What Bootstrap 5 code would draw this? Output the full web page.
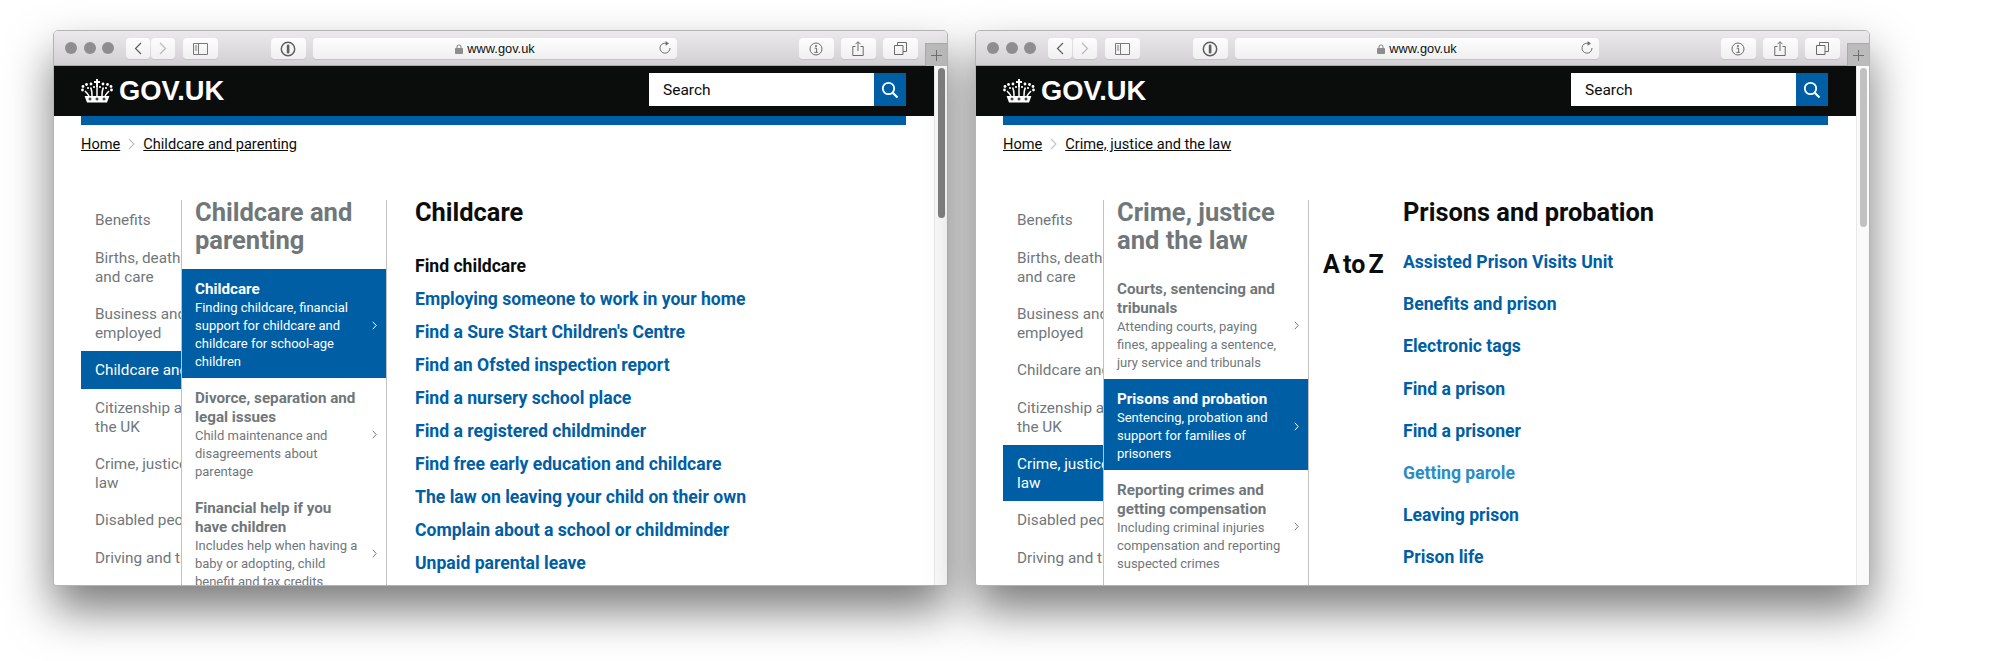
<!DOCTYPE html>
<html lang="en">
<head>
    <meta charset="UTF-8">
    <meta name="viewport" content="width=device-width, initial-scale=1.0">
    <title>GOV.UK navigation</title>
    <link href="https://cdn.jsdelivr.net/npm/bootstrap@5.3.0/dist/css/bootstrap.min.css" rel="stylesheet">
    <style>
        body { width: 2000px; height: 661px; overflow: hidden; background: #fff; font-family: Roboto, "Noto Sans", sans-serif; color: #0b0c0c; }
        .desk { padding: 30px 0 0 53px; gap: 27px; }

        /* safari window */
        .safari { width: 895px; height: 556px; border: 1px solid #b4b4b4; border-radius: 5px 5px 3px 3px; background: #fff; box-shadow: 0 24px 46px rgba(0,0,0,.52); overflow: hidden; }
        .safari-bar { height: 35px; flex: none; padding: 7px 0 0 11px; background: linear-gradient(#ebe9eb, #d2d0d2); border-bottom: 1px solid #a9a9a9; }
        .dot-light { width: 12px; height: 12px; border-radius: 50%; background: #8e8d90; margin-right: 6.5px; }
        .bar-btn { height: 21px; background: linear-gradient(#fdfdfd, #f1f0f1); border-radius: 4px; box-shadow: 0 1px 0 #c4c3c4; }
        .w-nav { width: 24px; }
        .w-tool { width: 34.5px; }
        .url-box { width: 364px; height: 21px; font: 12.8px "Liberation Sans", sans-serif; color: #111; }
        .url-reload { position: absolute; right: 5px; top: 3px; }
        .new-tab { position: absolute; right: 0; top: 12px; width: 22px; height: 23px; background: #bcbbbc; border-left: 1px solid #aaa; border-top: 1px solid #aaa; }
        .gap-back { margin-left: 5px; }
        .gap-fwd { margin-left: 1px; }
        .gap-side { margin-left: 8.500px; }
        .gap-pass { margin-left: 53.500px; }
        .gap-url { margin-left: 7.500px; }
        .gap-info { margin-left: 122px; }
        .gap-tool { margin-left: 7.500px; }

        /* page */
        .page-area { width: 880px; min-width: 0; overflow: hidden; }
        .gov-top { height: 50px; flex: none; background: #0b0c0c; padding: 0 28px 0 27px; }
        .gov-word { font: 700 27.3px/1 "Liberation Sans", sans-serif; color: #fff; margin-left: 6px; }
        .gov-search { width: 257px; height: 33px; margin-bottom: 3px; }
        .gov-search .form-control { height: 33px; border-radius: 0; border: 0; border-right: 1px solid #555; padding: 0 0 0 14px; font-size: 15.5px; color: #0b0c0c; }
        .gov-search .form-control::placeholder { color: #0b0c0c; opacity: 1; }
        .gov-search .btn { width: 32px; height: 33px; padding: 0; border-radius: 0; border: 0; background: #005ea5; }
        .gov-stripe { height: 9px; flex: none; margin: 0 28px 0 27px; background: #005ea5; }
        .gov-crumbs { margin: 9px 0 46px 27px; font-size: 14.6px; line-height: 20px; }
        .gov-crumbs a { color: #0b0c0c; }
        .crumb-sep { margin: 0 8px 0 8px; }

        .columns { padding-left: 27px; height: 400px; }
        .col-topics { width: 100px; flex: none; overflow: hidden; padding-top: 1px; }
        .col-topics ul { width: 260px; }
        .col-topics li { min-height: 38px; padding: 10px 14px 8px; font-size: 15.3px; line-height: 19px; color: #6f777b; white-space: nowrap; }
        .col-topics li.is-on { background: #005ea5; color: #fff; }
        .col-sub { width: 206px; flex: none; border-left: 1px solid #bfc1c3; border-right: 1px solid #bfc1c3; overflow: hidden; }
        .col-sub h2 { margin: -2px 0 15px; padding: 0 13px; font-size: 25.5px; line-height: 28px; font-weight: 700; color: #6f777b; }
        .sub-item { padding: 11px 24px 7px 13px; color: #6f777b; position: relative; }
        .sub-item-tall { min-height: 128px; }
        .sub-item strong { display: block; font-size: 15.2px; line-height: 19px; font-weight: 700; }
        .sub-item span { display: block; font-size: 13px; line-height: 18px; }
        .sub-item.is-on { background: #005ea5; color: #fff; }
        .sub-item svg { position: absolute; right: 9px; top: 50%; margin-top: -3px; }
        .atoz { width: 94px; flex: none; padding: 50px 0 0 14px; font-size: 25px; line-height: 30px; font-weight: 700; word-spacing: -3px; color: #0b0c0c; }
        .col-links { padding-left: 28px; }
        .atoz + .col-links { padding-left: 0; }
        .col-links h2 { margin: -2px 0 29px; font-size: 25.4px; line-height: 28px; font-weight: 700; color: #0b0c0c; }
        .col-links h3 { margin: 0 0 11px; font-size: 17.6px; line-height: 22px; font-weight: 700; color: #0b0c0c; }
        .col-links li { margin-bottom: 11px; font-size: 17.6px; line-height: 22px; font-weight: 700; }
        .col-links a { color: #005ea5; text-decoration: none; }
        .col-links a.was-seen { color: #2b8cc4; }
        .wide-links h2 { margin-bottom: 25px; }
        .wide-links li { margin-bottom: 20.2px; }

        .fake-scroll { width: 13px; flex: none; padding: 2px 2px 0 3px; background: #fafafa; border-left: 1px solid #e8e8e8; }
        .scroll-thumb { border-radius: 4px; background: #808080; height: 150px; }
        .scroll-thumb.is-pale { background: #c1c1c1; height: 159px; }
    </style>
</head>
<body>
    <svg width="0" height="0" class="position-absolute">
        <symbol id="ic-crown" viewBox="0 0 32 24">
            <g fill="#fff">
                <rect x="15" y="0" width="2" height="8"/><rect x="13" y="2" width="6" height="2"/>
                <circle cx="2" cy="7.5" r="1.4"/><circle cx="1.5" cy="11" r="1.4"/><circle cx="5.5" cy="5.5" r="1.4"/><circle cx="10" cy="5" r="1.4"/>
                <circle cx="22" cy="5" r="1.4"/><circle cx="26.5" cy="5.5" r="1.4"/><circle cx="30" cy="7.5" r="1.4"/><circle cx="30.5" cy="11" r="1.4"/>
                <circle cx="13" cy="8" r="1.1"/><circle cx="19" cy="8" r="1.1"/><circle cx="7" cy="9" r="1.1"/><circle cx="25" cy="9" r="1.1"/>
                <path d="M6 23.5 3.6 17h24.8L26 23.5Z"/>
            </g>
            <path d="M4 12c1.5 1.500 3 3 4 5M9.500 8.500C11 11 11 14 11 17M16 8v9M22.500 8.500C21 11 21 14 21 17M28 12c-1.500 1.500-3 3-4 5" fill="none" stroke="#fff" stroke-width="1.500"/>
            <path d="M9 18.500v3M7.500 20h3M16 18.500v3M14.500 20h3M23 18.500v3M21.500 20h3" stroke="#0b0c0c" stroke-width="1"/>
        </symbol>
        <symbol id="ic-back" viewBox="0 0 8 13"><path d="M7 1 1.500 6.500 7 12" fill="none" stroke="#5f5f5f" stroke-width="1.200"/></symbol>
        <symbol id="ic-fwd" viewBox="0 0 8 13"><path d="M1 1l5.500 5.500L1 12" fill="none" stroke="#b9b9b9" stroke-width="1.200"/></symbol>
        <symbol id="ic-side" viewBox="0 0 15 12"><path d="M.5.500h14v11H.5zM5.500.500v11M1.800 3h2.400M1.800 5h2.400M1.800 7h2.400" fill="none" stroke="#7a7a7a"/></symbol>
        <symbol id="ic-pass" viewBox="0 0 16 16"><circle cx="8" cy="8" r="6.700" fill="none" stroke="#5f5f5f" stroke-width="1.500"/><rect x="6.800" y="3.600" width="2.600" height="8.800" rx="1.200" fill="#5f5f5f"/></symbol>
        <symbol id="ic-lock" viewBox="0 0 8 10"><rect y="4" width="8" height="6" rx=".8" fill="#8d8d8d"/><path d="M2 4.500V3a2 2 0 0 1 4 0v1.500" fill="none" stroke="#8d8d8d" stroke-width="1.100"/></symbol>
        <symbol id="ic-reload" viewBox="0 0 14 14"><path d="M8.200 2.300A5 5 0 1 0 12 7" fill="none" stroke="#6e6e6e" stroke-width="1"/><path d="M7.600 0l3.400 2.400-3.400 2.400Z" fill="#6e6e6e"/></symbol>
        <symbol id="ic-info" viewBox="0 0 14 14"><circle cx="7" cy="7" r="6" fill="none" stroke="#6a6a6a" stroke-width="1"/><circle cx="7" cy="4" r="1" fill="#6a6a6a"/><path d="M5.600 6.200h2v4M5.400 10.400h3.400" fill="none" stroke="#6a6a6a" stroke-width="1"/></symbol>
        <symbol id="ic-share" viewBox="0 0 12 15"><path d="M3.500 5.500H.8v9h10.400v-9H8.500M6 10V1M3.500 3.200 6 .7l2.500 2.500" fill="none" stroke="#6a6a6a"/></symbol>
        <symbol id="ic-tabs" viewBox="0 0 13 13"><path d="M.5 3.500h8.500v9H.5zM3.500 3.500V.5h9v9H9" fill="none" stroke="#6a6a6a"/></symbol>
        <symbol id="ic-plus" viewBox="0 0 11 11"><path d="M5.500 0v11M0 5.500h11" stroke="#6f6f6f"/></symbol>
        <symbol id="ic-search" viewBox="0 0 18 18"><circle cx="7.500" cy="7.500" r="5.700" fill="none" stroke="#fff" stroke-width="1.800"/><path d="M11.700 11.700 16.500 16.500" stroke="#fff" stroke-width="2.200"/></symbol>
        <symbol id="ic-crumb" viewBox="0 0 7 12"><path d="M1 1l5 5-5 5" fill="none" stroke="#bfc1c3" stroke-width="1.100"/></symbol>
        <symbol id="ic-more" viewBox="0 0 5 9"><path d="M.8.800 4.200 4.500.8 8.200" fill="none" stroke="currentColor" stroke-width="1"/></symbol>
    </svg>

    <div class="desk d-flex">
        <!-- childcare window -->
        <div class="safari position-relative d-flex flex-column">
            <div class="safari-bar d-flex">
                <div class="d-flex pt-1"><i class="dot-light"></i><i class="dot-light"></i><i class="dot-light"></i></div>
                <div class="bar-btn w-nav gap-back d-flex align-items-center justify-content-center"><svg width="8" height="13"><use href="#ic-back"/></svg></div>
                <div class="bar-btn w-nav gap-fwd d-flex align-items-center justify-content-center"><svg width="8" height="13"><use href="#ic-fwd"/></svg></div>
                <div class="bar-btn w-tool gap-side d-flex align-items-center justify-content-center"><svg width="15" height="12"><use href="#ic-side"/></svg></div>
                <div class="bar-btn w-tool gap-pass d-flex align-items-center justify-content-center"><svg width="16" height="16"><use href="#ic-pass"/></svg></div>
                <div class="bar-btn url-box gap-url position-relative d-flex align-items-center justify-content-center gap-1"><svg width="8" height="10"><use href="#ic-lock"/></svg><span>www.gov.uk</span><svg class="url-reload" width="14" height="14"><use href="#ic-reload"/></svg></div>
                <div class="bar-btn w-tool gap-info d-flex align-items-center justify-content-center"><svg width="14" height="14"><use href="#ic-info"/></svg></div>
                <div class="bar-btn w-tool gap-tool d-flex align-items-center justify-content-center"><svg width="12" height="15"><use href="#ic-share"/></svg></div>
                <div class="bar-btn w-tool gap-tool d-flex align-items-center justify-content-center"><svg width="13" height="13"><use href="#ic-tabs"/></svg></div>
                <div class="new-tab d-flex align-items-center justify-content-center"><svg width="11" height="11"><use href="#ic-plus"/></svg></div>
            </div>
            <div class="d-flex flex-grow-1 overflow-hidden">
                <div class="page-area d-flex flex-column">
                    <div class="gov-top d-flex align-items-center justify-content-between">
                        <div class="d-flex align-items-center"><svg width="32" height="24"><use href="#ic-crown"/></svg><span class="gov-word">GOV.UK</span></div>
                        <form class="gov-search input-group flex-nowrap"><input class="form-control" type="text" placeholder="Search"><button class="btn d-flex align-items-center justify-content-center" type="button"><svg width="18" height="18"><use href="#ic-search"/></svg></button></form>
                    </div>
                    <div class="gov-stripe"></div>
                    <div class="gov-crumbs d-flex align-items-center"><a href="#">Home</a><svg class="crumb-sep" width="7" height="12"><use href="#ic-crumb"/></svg><a href="#">Childcare and parenting</a></div>
                    <div class="columns d-flex">
                        <div class="col-topics">
                            <ul class="list-unstyled m-0">
                                <li>Benefits</li>
                                <li>Births, deaths, marriages<br>and care</li>
                                <li>Business and self-<br>employed</li>
                                <li class="is-on">Childcare and parenting</li>
                                <li>Citizenship and living in<br>the UK</li>
                                <li>Crime, justice and the<br>law</li>
                                <li>Disabled people</li>
                                <li>Driving and transport</li>
                            </ul>
                        </div>
                        <div class="col-sub">
                            <h2>Childcare and parenting</h2>
                            <div class="sub-item is-on"><strong>Childcare</strong><span>Finding childcare, financial support for childcare and childcare for school-age children</span><svg width="5" height="9"><use href="#ic-more"/></svg></div>
                            <div class="sub-item"><strong>Divorce, separation and legal issues</strong><span>Child maintenance and disagreements about parentage</span><svg width="5" height="9"><use href="#ic-more"/></svg></div>
                            <div class="sub-item sub-item-tall"><strong>Financial help if you have children</strong><span>Includes help when having a baby or adopting, child benefit and tax credits,</span><svg width="5" height="9"><use href="#ic-more"/></svg></div>
                        </div>
                        <div class="col-links">
                            <h2>Childcare</h2>
                            <h3>Find childcare</h3>
                            <ul class="list-unstyled m-0">
                                <li><a href="#">Employing someone to work in your home</a></li>
                                <li><a href="#">Find a Sure Start Children's Centre</a></li>
                                <li><a href="#">Find an Ofsted inspection report</a></li>
                                <li><a href="#">Find a nursery school place</a></li>
                                <li><a href="#">Find a registered childminder</a></li>
                                <li><a href="#">Find free early education and childcare</a></li>
                                <li><a href="#">The law on leaving your child on their own</a></li>
                                <li><a href="#">Complain about a school or childminder</a></li>
                                <li><a href="#">Unpaid parental leave</a></li>
                            </ul>
                        </div>
                    </div>
                </div>
                <div class="fake-scroll"><div class="scroll-thumb"></div></div>
            </div>
        </div>

        <!-- prisons window -->
        <div class="safari position-relative d-flex flex-column">
            <div class="safari-bar d-flex">
                <div class="d-flex pt-1"><i class="dot-light"></i><i class="dot-light"></i><i class="dot-light"></i></div>
                <div class="bar-btn w-nav gap-back d-flex align-items-center justify-content-center"><svg width="8" height="13"><use href="#ic-back"/></svg></div>
                <div class="bar-btn w-nav gap-fwd d-flex align-items-center justify-content-center"><svg width="8" height="13"><use href="#ic-fwd"/></svg></div>
                <div class="bar-btn w-tool gap-side d-flex align-items-center justify-content-center"><svg width="15" height="12"><use href="#ic-side"/></svg></div>
                <div class="bar-btn w-tool gap-pass d-flex align-items-center justify-content-center"><svg width="16" height="16"><use href="#ic-pass"/></svg></div>
                <div class="bar-btn url-box gap-url position-relative d-flex align-items-center justify-content-center gap-1"><svg width="8" height="10"><use href="#ic-lock"/></svg><span>www.gov.uk</span><svg class="url-reload" width="14" height="14"><use href="#ic-reload"/></svg></div>
                <div class="bar-btn w-tool gap-info d-flex align-items-center justify-content-center"><svg width="14" height="14"><use href="#ic-info"/></svg></div>
                <div class="bar-btn w-tool gap-tool d-flex align-items-center justify-content-center"><svg width="12" height="15"><use href="#ic-share"/></svg></div>
                <div class="bar-btn w-tool gap-tool d-flex align-items-center justify-content-center"><svg width="13" height="13"><use href="#ic-tabs"/></svg></div>
                <div class="new-tab d-flex align-items-center justify-content-center"><svg width="11" height="11"><use href="#ic-plus"/></svg></div>
            </div>
            <div class="d-flex flex-grow-1 overflow-hidden">
                <div class="page-area d-flex flex-column">
                    <div class="gov-top d-flex align-items-center justify-content-between">
                        <div class="d-flex align-items-center"><svg width="32" height="24"><use href="#ic-crown"/></svg><span class="gov-word">GOV.UK</span></div>
                        <form class="gov-search input-group flex-nowrap"><input class="form-control" type="text" placeholder="Search"><button class="btn d-flex align-items-center justify-content-center" type="button"><svg width="18" height="18"><use href="#ic-search"/></svg></button></form>
                    </div>
                    <div class="gov-stripe"></div>
                    <div class="gov-crumbs d-flex align-items-center"><a href="#">Home</a><svg class="crumb-sep" width="7" height="12"><use href="#ic-crumb"/></svg><a href="#">Crime, justice and the law</a></div>
                    <div class="columns d-flex">
                        <div class="col-topics">
                            <ul class="list-unstyled m-0">
                                <li>Benefits</li>
                                <li>Births, deaths, marriages<br>and care</li>
                                <li>Business and self-<br>employed</li>
                                <li>Childcare and parenting</li>
                                <li>Citizenship and living in<br>the UK</li>
                                <li class="is-on">Crime, justice and the<br>law</li>
                                <li>Disabled people</li>
                                <li>Driving and transport</li>
                            </ul>
                        </div>
                        <div class="col-sub">
                            <h2>Crime, justice and the law</h2>
                            <div class="sub-item"><strong>Courts, sentencing and tribunals</strong><span>Attending courts, paying fines, appealing a sentence, jury service and tribunals</span><svg width="5" height="9"><use href="#ic-more"/></svg></div>
                            <div class="sub-item is-on"><strong>Prisons and probation</strong><span>Sentencing, probation and support for families of prisoners</span><svg width="5" height="9"><use href="#ic-more"/></svg></div>
                            <div class="sub-item"><strong>Reporting crimes and getting compensation</strong><span>Including criminal injuries compensation and reporting suspected crimes</span><svg width="5" height="9"><use href="#ic-more"/></svg></div>
                        </div>
                        <div class="atoz">A to Z</div>
                        <div class="col-links wide-links">
                            <h2>Prisons and probation</h2>
                            <ul class="list-unstyled m-0">
                                <li><a href="#">Assisted Prison Visits Unit</a></li>
                                <li><a href="#">Benefits and prison</a></li>
                                <li><a href="#">Electronic tags</a></li>
                                <li><a href="#">Find a prison</a></li>
                                <li><a href="#">Find a prisoner</a></li>
                                <li><a class="was-seen" href="#">Getting parole</a></li>
                                <li><a href="#">Leaving prison</a></li>
                                <li><a href="#">Prison life</a></li>
                            </ul>
                        </div>
                    </div>
                </div>
                <div class="fake-scroll"><div class="scroll-thumb is-pale"></div></div>
            </div>
        </div>
    </div>
    <script src="https://cdn.jsdelivr.net/npm/bootstrap@5.3.0/dist/js/bootstrap.bundle.min.js"></script>
</body>
</html>
